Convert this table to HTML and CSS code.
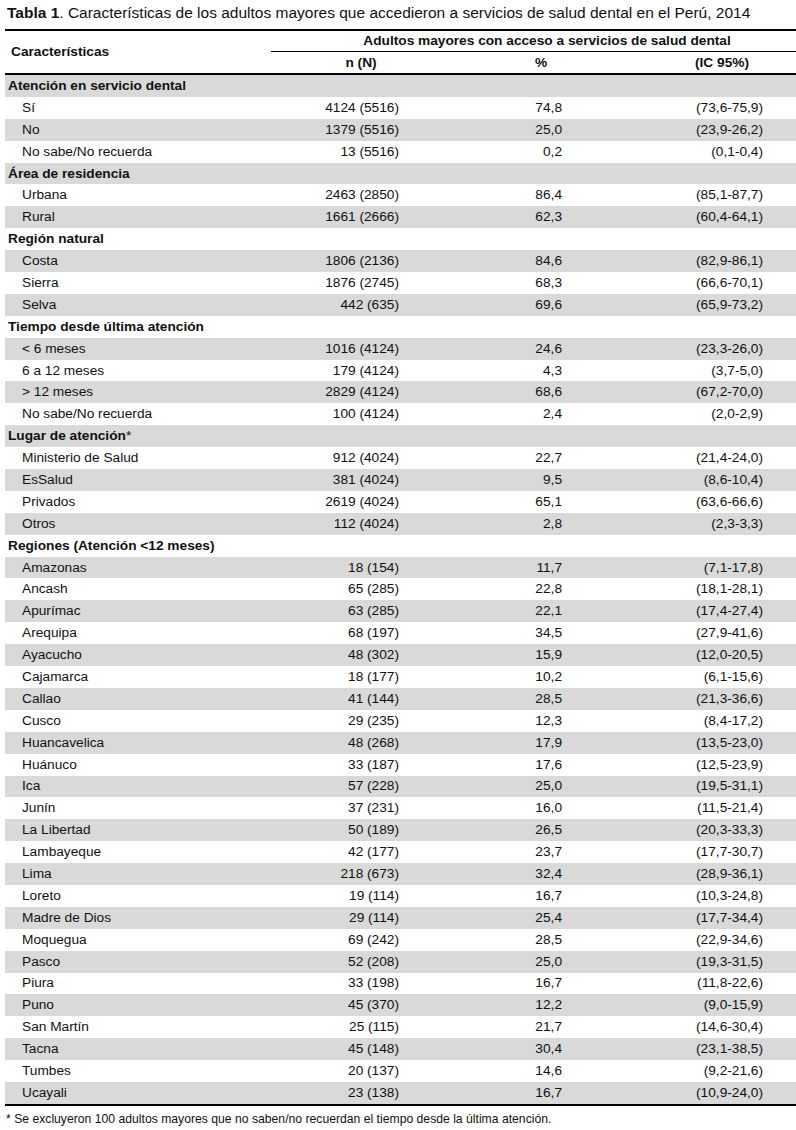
FILE: index.html
```html
<!DOCTYPE html>
<html lang="es">
<head>
<meta charset="utf-8">
<title>Tabla 1</title>
<link rel="stylesheet" href="styles.css">
</head>
<body>
<div class="page">
  <p class="caption"><b>Tabla 1</b>. Características de los adultos mayores que accedieron a servicios de salud dental en el Perú, 2014</p>
  <table class="data">
    <colgroup>
      <col class="c1"><col class="c2"><col class="c3"><col class="c4">
    </colgroup>
    <thead>
      <tr class="h1">
        <th rowspan="2" class="hlabel">Características</th>
        <th colspan="3" class="hspan">Adultos mayores con acceso a servicios de salud dental</th>
      </tr>
      <tr class="h2">
        <th class="hn">n (N)</th>
        <th class="hp">%</th>
        <th class="hic">(IC 95%)</th>
      </tr>
    </thead>
    <tbody>
      <tr class="grp"><td colspan="4">Atención en servicio dental</td></tr>
      <tr><td>Sí</td><td>4124 (5516)</td><td>74,8</td><td>(73,6-75,9)</td></tr>
      <tr><td>No</td><td>1379 (5516)</td><td>25,0</td><td>(23,9-26,2)</td></tr>
      <tr><td>No sabe/No recuerda</td><td>13 (5516)</td><td>0,2</td><td>(0,1-0,4)</td></tr>
      <tr class="grp"><td colspan="4">Área de residencia</td></tr>
      <tr><td>Urbana</td><td>2463 (2850)</td><td>86,4</td><td>(85,1-87,7)</td></tr>
      <tr><td>Rural</td><td>1661 (2666)</td><td>62,3</td><td>(60,4-64,1)</td></tr>
      <tr class="grp"><td colspan="4">Región natural</td></tr>
      <tr><td>Costa</td><td>1806 (2136)</td><td>84,6</td><td>(82,9-86,1)</td></tr>
      <tr><td>Sierra</td><td>1876 (2745)</td><td>68,3</td><td>(66,6-70,1)</td></tr>
      <tr><td>Selva</td><td>442 (635)</td><td>69,6</td><td>(65,9-73,2)</td></tr>
      <tr class="grp"><td colspan="4">Tiempo desde última atención</td></tr>
      <tr><td>&lt; 6 meses</td><td>1016 (4124)</td><td>24,6</td><td>(23,3-26,0)</td></tr>
      <tr><td>6 a 12 meses</td><td>179 (4124)</td><td>4,3</td><td>(3,7-5,0)</td></tr>
      <tr><td>&gt; 12 meses</td><td>2829 (4124)</td><td>68,6</td><td>(67,2-70,0)</td></tr>
      <tr><td>No sabe/No recuerda</td><td>100 (4124)</td><td>2,4</td><td>(2,0-2,9)</td></tr>
      <tr class="grp"><td colspan="4">Lugar de atención<span class="ast">*</span></td></tr>
      <tr><td>Ministerio de Salud</td><td>912 (4024)</td><td>22,7</td><td>(21,4-24,0)</td></tr>
      <tr><td>EsSalud</td><td>381 (4024)</td><td>9,5</td><td>(8,6-10,4)</td></tr>
      <tr><td>Privados</td><td>2619 (4024)</td><td>65,1</td><td>(63,6-66,6)</td></tr>
      <tr><td>Otros</td><td>112 (4024)</td><td>2,8</td><td>(2,3-3,3)</td></tr>
      <tr class="grp"><td colspan="4">Regiones (Atención &lt;12 meses)</td></tr>
      <tr><td>Amazonas</td><td>18 (154)</td><td>11,7</td><td>(7,1-17,8)</td></tr>
      <tr><td>Ancash</td><td>65 (285)</td><td>22,8</td><td>(18,1-28,1)</td></tr>
      <tr><td>Apurímac</td><td>63 (285)</td><td>22,1</td><td>(17,4-27,4)</td></tr>
      <tr><td>Arequipa</td><td>68 (197)</td><td>34,5</td><td>(27,9-41,6)</td></tr>
      <tr><td>Ayacucho</td><td>48 (302)</td><td>15,9</td><td>(12,0-20,5)</td></tr>
      <tr><td>Cajamarca</td><td>18 (177)</td><td>10,2</td><td>(6,1-15,6)</td></tr>
      <tr><td>Callao</td><td>41 (144)</td><td>28,5</td><td>(21,3-36,6)</td></tr>
      <tr><td>Cusco</td><td>29 (235)</td><td>12,3</td><td>(8,4-17,2)</td></tr>
      <tr><td>Huancavelica</td><td>48 (268)</td><td>17,9</td><td>(13,5-23,0)</td></tr>
      <tr><td>Huánuco</td><td>33 (187)</td><td>17,6</td><td>(12,5-23,9)</td></tr>
      <tr><td>Ica</td><td>57 (228)</td><td>25,0</td><td>(19,5-31,1)</td></tr>
      <tr><td>Junín</td><td>37 (231)</td><td>16,0</td><td>(11,5-21,4)</td></tr>
      <tr><td>La Libertad</td><td>50 (189)</td><td>26,5</td><td>(20,3-33,3)</td></tr>
      <tr><td>Lambayeque</td><td>42 (177)</td><td>23,7</td><td>(17,7-30,7)</td></tr>
      <tr><td>Lima</td><td>218 (673)</td><td>32,4</td><td>(28,9-36,1)</td></tr>
      <tr><td>Loreto</td><td>19 (114)</td><td>16,7</td><td>(10,3-24,8)</td></tr>
      <tr><td>Madre de Dios</td><td>29 (114)</td><td>25,4</td><td>(17,7-34,4)</td></tr>
      <tr><td>Moquegua</td><td>69 (242)</td><td>28,5</td><td>(22,9-34,6)</td></tr>
      <tr><td>Pasco</td><td>52 (208)</td><td>25,0</td><td>(19,3-31,5)</td></tr>
      <tr><td>Piura</td><td>33 (198)</td><td>16,7</td><td>(11,8-22,6)</td></tr>
      <tr><td>Puno</td><td>45 (370)</td><td>12,2</td><td>(9,0-15,9)</td></tr>
      <tr><td>San Martín</td><td>25 (115)</td><td>21,7</td><td>(14,6-30,4)</td></tr>
      <tr><td>Tacna</td><td>45 (148)</td><td>30,4</td><td>(23,1-38,5)</td></tr>
      <tr><td>Tumbes</td><td>20 (137)</td><td>14,6</td><td>(9,2-21,6)</td></tr>
      <tr><td>Ucayali</td><td>23 (138)</td><td>16,7</td><td>(10,9-24,0)</td></tr>
    </tbody>
  </table>
  <p class="note">* Se excluyeron 100 adultos mayores que no saben/no recuerdan el tiempo desde la última atención.</p>
</div>
</body>
</html>
```
FILE: styles.css
```css
html, body {
  margin: 0;
  padding: 0;
  background: #ffffff;
}

.page {
  font-family: "Liberation Sans", Arial, sans-serif;
  color: #111111;
  padding: 3px 0 0 5px;
}

.caption {
  margin: 0 0 0 2px;
  font-size: 15.5px;
  line-height: 19px;
  height: 26px;
}

.caption b {
  font-weight: bold;
}

.data {
  border-collapse: collapse;
  table-layout: fixed;
  width: 791px;
  font-size: 13.7px;
  border-top: 2px solid #000;
  border-bottom: 2px solid #000;
}

.c1 { width: 266px; }
.c2 { width: 180px; }
.c3 { width: 180px; }
.c4 { width: 165px; }

.data th {
  font-weight: bold;
  padding: 0;
  text-align: center;
  line-height: 16px;
}

.h1 th { height: 20px; }
.h2 th { height: 21px; }

.hlabel {
  text-align: left !important;
  padding-left: 6px !important;
  border-bottom: 2px solid #000;
  vertical-align: middle;
}

.hspan {
  padding-left: 27px !important;
  border-bottom: 1px solid #000;
}

.h2 th {
  border-bottom: 2px solid #000;
}

.hic {
  padding-left: 17px !important;
}

.data td {
  height: 21.9px;
  padding: 0;
  line-height: 16px;
  text-align: right;
  white-space: nowrap;
}

.data tbody tr:nth-child(odd) {
  background: #d9d9d9;
}

.data td:nth-child(1) {
  text-align: left;
  padding-left: 17px;
}

.data td:nth-child(2) { padding-right: 52px; }
.data td:nth-child(3) { padding-right: 69px; }
.data td:nth-child(4) { padding-right: 33px; }

.data tr.grp td {
  text-align: left;
  padding-left: 3px;
  padding-right: 0;
  font-weight: bold;
}

.ast {
  font-weight: normal;
}

.note {
  margin: 6px 0 0 1px;
  font-size: 12.2px;
  line-height: 15px;
}
```
